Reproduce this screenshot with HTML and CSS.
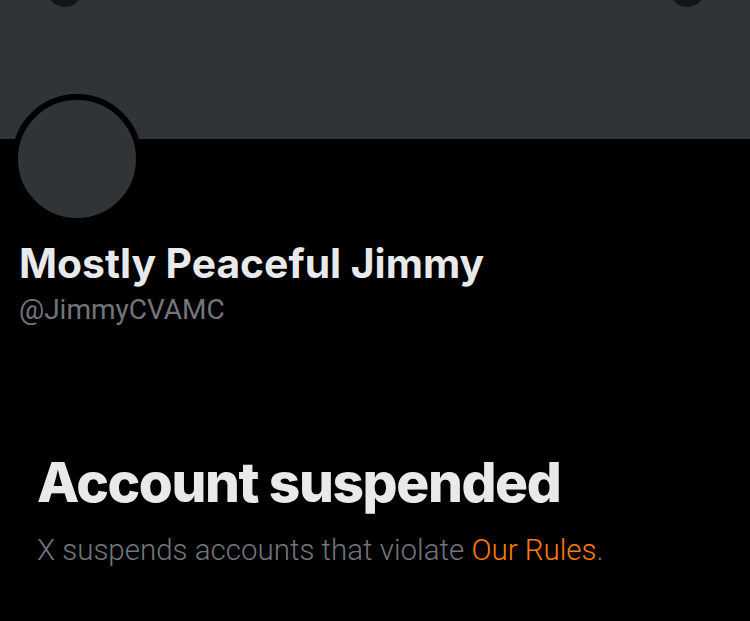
FILE: index.html
```html
<!DOCTYPE html>
<html>
<head>
<meta charset="utf-8">
<link rel="stylesheet" href="styles.css">
</head>
<body>
<div class="page">
  <header class="banner">
    <span class="btn btn-left"></span>
    <span class="btn btn-right"></span>
  </header>
  <div class="avatar-wrap"><div class="avatar"></div></div>
  <section class="profile">
    <h1 class="name">Mostly Peaceful Jimmy</h1>
    <div class="handle">@JimmyCVAMC</div>
  </section>
  <section class="notice">
    <h2 class="title">Account suspended</h2>
    <p class="desc">X suspends accounts that violate <a class="link">Our Rules</a>.</p>
  </section>
</div>
</body>
</html>
```
FILE: styles.css
```css
html, body { margin: 0; padding: 0; background: #000; }
.page { width: 750px; height: 621px; overflow: hidden; background: #000; font-family: Inter, "Noto Sans", sans-serif; }
.banner { position: relative; height: 139px; background: #313437; }
.btn { position: absolute; top: -29px; width: 36px; height: 36px; border-radius: 50%; background: rgba(15,16,18,0.85); }
.btn-left { left: 47px; }
.btn-right { left: 669px; }
.avatar-wrap { position: relative; margin-top: -45px; padding-left: 12px; }
.avatar { width: 118px; height: 118px; border: 6px solid #000; border-radius: 50%; background: #313437; }
.profile { padding-left: 19px; }
.name { margin: 15px 0 0; font-size: 40.8px; line-height: 48px; font-weight: 700; color: #e7e9ea; letter-spacing: 0; }
.handle { margin-top: 5px; font-family: Roboto, sans-serif; font-size: 28px; line-height: 36px; color: #71767b; }
.notice { padding: 122px 0 0 37px; }
.title { margin: 0; font-size: 55px; line-height: 64px; font-weight: 800; color: #e7e9ea; letter-spacing: -1.4px; }
.desc { margin: 16px 0 0; font-family: Roboto, sans-serif; font-size: 29.5px; line-height: 40px; font-weight: 300; color: #71767b; }
.link { color: #ff7a00; text-decoration: none; }
```
